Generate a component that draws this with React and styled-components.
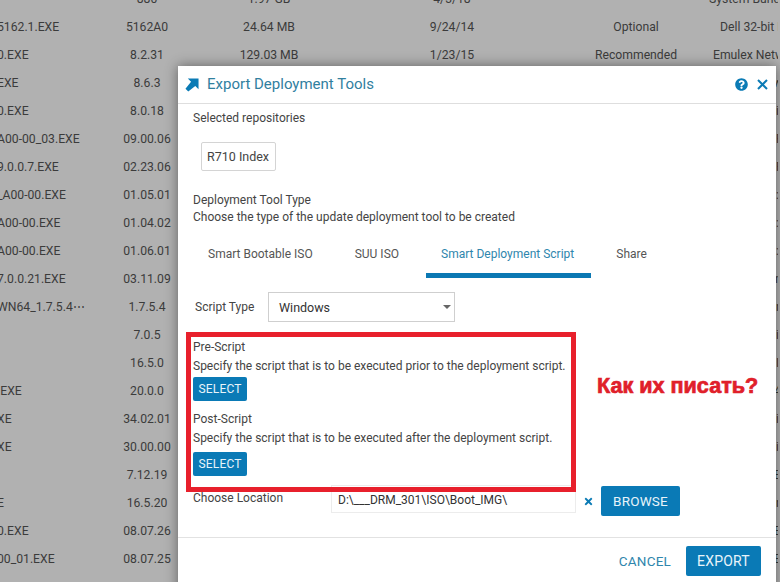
import React from 'react'
import styled, { createGlobalStyle } from 'styled-components'
import { FaQuestionCircle, FaTimes } from 'react-icons/fa'

const GlobalStyle = createGlobalStyle`
    html, body {
        margin: 0;
        padding: 0;
        width: 780px;
        height: 582px;
        overflow: hidden;
        background: #b1b1b1;
    }
`

const Page = styled.div`
    position: relative;
    width: 780px;
    height: 582px;
    overflow: hidden;
    background: #b1b1b1;
    font-family: Roboto, "Liberation Sans", sans-serif;
    color: #3d3d3d;
`

const Table = styled.div`
    margin-top: -15px;
`

const Row = styled.div`
    display: grid;
    grid-template-columns: 102px 90px 154px 212px 156px 64px;
    height: 28px;
    align-items: center;
    font-size: 12.2px;
    color: #3b3b3b;
    white-space: nowrap;
`

const Name = styled.div`
    margin-left: -3px;
`

const Cell = styled.div`
    text-align: center;
`

const Description = styled.div`
    margin-left: ${p => p.$indent}px;
    overflow: hidden;
`

const Modal = styled.div`
    position: absolute;
    left: 178px;
    top: 66px;
    width: 598px;
    height: 530px;
    background: #fff;
    box-shadow: 0 0 12px rgba(0, 0, 0, 0.45);
    font-size: 12px;
    color: #444;
`

const Header = styled.div`
    display: flex;
    align-items: center;
    height: 37px;
    padding: 0 8px 0 7px;
    border-bottom: 1px solid #dedede;
    color: #0b7bb5;
`

const Title = styled.div`
    margin-left: 8px;
    padding-bottom: 2px;
    flex: 1;
    font-size: 15px;
    color: #31809f;
`

const HeaderIcons = styled.div`
    display: flex;
    align-items: center;
    gap: 9px;
`

const Body = styled.div`
    padding: 0 15px;
`

const Line = styled.div`
    height: ${p => p.$h || 17}px;
    line-height: ${p => p.$h || 17}px;
    white-space: nowrap;
`

const Selected = styled(Line)`
    margin-top: 6px;
`

const Chip = styled.div`
    display: flex;
    align-items: center;
    box-sizing: border-box;
    width: 75px;
    height: 29px;
    margin: 15px 0 0 8px;
    padding: 0 5px;
    border: 1px solid #d4d4d4;
    border-radius: 2px;
    font-size: 12.5px;
    white-space: nowrap;
    color: #444;
`

const TypeBlock = styled.div`
    margin-top: 21px;
`

const Tabs = styled.div`
    display: flex;
    margin-top: 9px;
`

const Tab = styled.div`
    padding: 0 ${p => (p.$active ? 17 : 15)}px 0 15px;
    margin-right: ${p => p.$gap}px;
    height: 38px;
    line-height: 38px;
    white-space: nowrap;
    color: ${p => (p.$active ? '#2f86ad' : '#555')};
    border-bottom: 5px solid ${p => (p.$active ? '#0b78b3' : 'transparent')};
`

const ScriptRow = styled.div`
    display: flex;
    align-items: center;
    margin-top: 14px;
    padding-left: 2px;
`

const ScriptLabel = styled.div`
    width: 73px;
`

const Select = styled.div`
    display: flex;
    align-items: center;
    justify-content: space-between;
    box-sizing: border-box;
    width: 187px;
    height: 30px;
    padding: 0 3px 0 10px;
    border: 1px solid #cfcfcf;
    font-size: 12.5px;
    color: #333;
`

const Caret = styled.span`
    width: 0;
    height: 0;
    border-left: 4px solid transparent;
    border-right: 4px solid transparent;
    border-top: 4px solid #666;
`

const ScriptBlock = styled.div`
    margin-top: ${p => p.$top}px;
`

const Button = styled.button`
    display: block;
    box-sizing: border-box;
    width: ${p => p.$w}px;
    height: ${p => p.$h}px;
    margin-top: ${p => p.$top || 0}px;
    padding: 0;
    border: none;
    border-radius: 2px;
    background: #0a7ab6;
    color: #e8f4fa;
    font-family: inherit;
    font-size: ${p => p.$size}px;
    letter-spacing: 0.2px;
`

const LocationRow = styled.div`
    display: flex;
    align-items: center;
    height: 30px;
    margin-top: 10px;
`

const LocationLabel = styled.div`
    width: 138px;
    margin-top: -6px;
`

const LocationInput = styled.div`
    box-sizing: border-box;
    align-self: flex-start;
    width: 245px;
    height: 28px;
    margin-top: -1px;
    padding: 7px 6px 0;
    border: 1px solid #ececec;
    color: #333;
`

const ClearIcon = styled.div`
    display: flex;
    width: 25px;
    justify-content: center;
    color: #0b7bb5;
`

const Footer = styled.div`
    display: flex;
    align-items: center;
    justify-content: flex-end;
    height: 46px;
    margin-top: 21px;
    padding: 0 15px 0 0;
    border-top: 1px solid #e2e2e2;
`

const Cancel = styled.div`
    margin-right: 15px;
    color: #2f86ad;
    font-size: 13.5px;
    letter-spacing: 0.2px;
`

const Annotation = styled.div`
    position: absolute;
    left: 186px;
    top: 332px;
    box-sizing: border-box;
    width: 390px;
    height: 160px;
    border: 5px solid #e8202c;
`

const Question = styled.div`
    position: absolute;
    left: 597px;
    top: 373px;
    font-family: "Liberation Sans", Arial, sans-serif;
    font-weight: 700;
    font-size: 21.6px;
    -webkit-text-stroke: 0.7px #e0202a;
    color: #e0202a;
    white-space: nowrap;
`

const ArrowIcon = () => (
    <svg width="14" height="14" viewBox="0 0 15 15">
        <path d="M3 0.5 L14.5 0.5 L14.5 12 L11 8.5 L3.5 14.5 L0.5 11.5 L6.5 4 Z" fill="currentColor" />
    </svg>
)

const CloseIcon = () => (
    <svg width="11" height="11" viewBox="0 0 11 11">
        <path d="M1 1 L10 10 M10 1 L1 10" stroke="currentColor" strokeWidth="2" fill="none" />
    </svg>
)

const rows = [
    ['', '880', '1.97 GB', '4/3/18', '', 'System Bund', -5],
    ['5162.1.EXE', '5162A0', '24.64 MB', '9/24/14', 'Optional', 'Dell 32-bit D', 6],
    ['0.EXE', '8.2.31', '129.03 MB', '1/23/15', 'Recommended', 'Emulex Netw', -1],
    ['EXE', '8.6.3', '', '', '', 'w', 59],
    ['0.EXE', '8.0.18', '', '', '', 'i', 62],
    ['A00-00_03.EXE', '09.00.06', '', '', '', 'F', 62],
    ['9.0.0.7.EXE', '02.23.06', '', '', '', 'F', 62],
    ['_A00-00.EXE', '01.05.01', '', '', '', ':', 62],
    ['A00-00.EXE', '01.04.02', '', '', '', ':', 62],
    ['A00-00.EXE', '01.06.01', '', '', '', ':', 62],
    ['7.0.0.21.EXE', '03.11.09', '', '', '', 'n', 61],
    ['WN64_1.7.5.4⋯', '1.7.5.4', '', '', '', 'r', 62],
    ['', '7.0.5', '', '', '', 'i', 62],
    ['', '16.5.0', '', '', '', 'Ir', 62],
    ['.EXE', '20.0.0', '', '', '', '4', 60],
    ['XE', '34.02.01', '', '', '', 'i', 62],
    ['XE', '30.00.00', '', '', '', 'i', 62],
    ['', '7.12.19', '', '', '', 'E', 60],
    ['E', '16.5.20', '', '', '', 'r', 62],
    ['0.EXE', '08.07.26', '', '', '', 'E', 60],
    ['00_01.EXE', '08.07.25', '', '', '', 'E', 60],
    ['.EXE', '1.1.44', '', '', '', 'E', 60],
]

export default function App() {
    return (
        <Page>
            <GlobalStyle />
            <Table>
                {rows.map((r, i) => (
                    <Row key={i}>
                        <Name>{r[0]}</Name>
                        <Cell>{r[1]}</Cell>
                        <Cell>{r[2]}</Cell>
                        <Cell>{r[3]}</Cell>
                        <Cell>{r[4]}</Cell>
                        <Description $indent={r[6]}>{r[5]}</Description>
                    </Row>
                ))}
            </Table>

            <Modal>
                <Header>
                    <ArrowIcon />
                    <Title>Export Deployment Tools</Title>
                    <HeaderIcons>
                        <FaQuestionCircle size={13} />
                        <CloseIcon />
                    </HeaderIcons>
                </Header>
                <Body>
                    <Selected>Selected repositories</Selected>
                    <Chip>R710 Index</Chip>
                    <TypeBlock>
                        <Line>Deployment Tool Type</Line>
                        <Line>Choose the type of the update deployment tool to be created</Line>
                    </TypeBlock>
                    <Tabs>
                        <Tab $gap={12}>Smart Bootable ISO</Tab>
                        <Tab $gap={12}>SUU ISO</Tab>
                        <Tab $gap={10} $active>Smart Deployment Script</Tab>
                        <Tab $gap={0}>Share</Tab>
                    </Tabs>
                    <ScriptRow>
                        <ScriptLabel>Script Type</ScriptLabel>
                        <Select>
                            Windows
                            <Caret />
                        </Select>
                    </ScriptRow>
                    <ScriptBlock $top={17}>
                        <Line>Pre-Script</Line>
                        <Line $h={21}>Specify the script that is to be executed prior to the deployment script.</Line>
                        <Button $w={54} $h={24} $size={12}>SELECT</Button>
                    </ScriptBlock>
                    <ScriptBlock $top={10}>
                        <Line>Post-Script</Line>
                        <Line $h={21}>Specify the script that is to be executed after the deployment script.</Line>
                        <Button $w={54} $h={24} $size={12} $top={3}>SELECT</Button>
                    </ScriptBlock>
                    <LocationRow>
                        <LocationLabel>Choose Location</LocationLabel>
                        <LocationInput>D:\___DRM_301\ISO\Boot_IMG\</LocationInput>
                        <ClearIcon><FaTimes size={11} /></ClearIcon>
                        <Button $w={79} $h={30} $size={13.5}>BROWSE</Button>
                    </LocationRow>
                </Body>
                <Footer>
                    <Cancel>CANCEL</Cancel>
                    <Button $w={75} $h={30} $size={14}>EXPORT</Button>
                </Footer>
            </Modal>

            <Annotation />
            <Question>Как их писать?</Question>
        </Page>
    )
}
